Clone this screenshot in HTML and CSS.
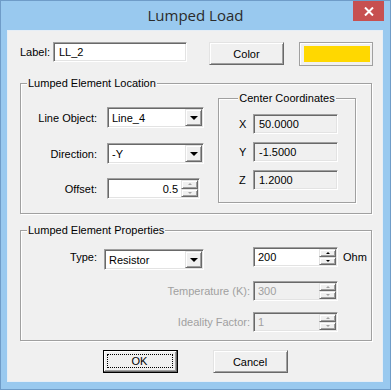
FILE: index.html
```html
<!DOCTYPE html>
<html lang="en">
<head>
  <meta charset="UTF-8">
  <title>Lumped Load</title>
  <link rel="stylesheet" href="styles.css">
</head>
<body>
  <div class="window">
    <!-- Barra del titolo -->
    <div class="titlebar">
      <span class="title">Lumped Load</span>
      <span class="close">
        <svg width="10" height="9" viewBox="0 0 10 9"><path d="M1 0.5 L9 8.5 M9 0.5 L1 8.5" stroke="#fff" stroke-width="2"/></svg>
      </span>
    </div>

    <div class="client">
      <!-- Etichetta e colore -->
      <div class="top-row">
        <span class="label-text">Label:</span>
        <span class="field field-label"><span class="value">LL_2</span></span>
        <span class="btn btn-color">Color</span>
        <span class="swatch"><span class="swatch-fill"></span></span>
      </div>

      <!-- Posizione -->
      <div class="group group-location">
        <div class="group-title">Lumped Element Location</div>
        <div class="location-body">
          <div class="location-left">
            <div class="form-row">
              <span class="row-label">Line Object:</span>
              <span class="field combo"><span class="value">Line_4</span><span class="drop"><i class="arrow"></i></span></span>
            </div>
            <div class="form-row row-direction">
              <span class="row-label">Direction:</span>
              <span class="field combo"><span class="value">-Y</span><span class="drop"><i class="arrow"></i></span></span>
            </div>
            <div class="form-row row-offset">
              <span class="row-label">Offset:</span>
              <span class="field spin-field offset"><span class="value right">0.5</span><span class="spinner disabled-spin"><i class="up"></i><i class="down"></i></span></span>
            </div>
          </div>

          <div class="group coords">
            <div class="group-title centered">Center Coordinates</div>
            <div class="coord-row first">
              <span class="coord-label">X</span>
              <span class="field readonly"><span class="value">50.0000</span></span>
            </div>
            <div class="coord-row">
              <span class="coord-label">Y</span>
              <span class="field readonly"><span class="value">-1.5000</span></span>
            </div>
            <div class="coord-row">
              <span class="coord-label">Z</span>
              <span class="field readonly"><span class="value">1.2000</span></span>
            </div>
          </div>
        </div>
      </div>

      <!-- Proprieta -->
      <div class="group group-props">
        <div class="group-title">Lumped Element Properties</div>
        <div class="prop-row first">
          <span class="row-label">Type:</span>
          <span class="field combo type-combo"><span class="value">Resistor</span><span class="drop"><i class="arrow"></i></span></span>
          <span class="field spin-field value-field"><span class="value">200</span><span class="spinner"><i class="up"></i><i class="down"></i></span></span>
          <span class="unit">Ohm</span>
        </div>
        <div class="prop-row disabled">
          <span class="long-label">Temperature (K):</span>
          <span class="field spin-field value-field off"><span class="value">300</span><span class="spinner disabled-spin"><i class="up"></i><i class="down"></i></span></span>
        </div>
        <div class="prop-row disabled">
          <span class="long-label">Ideality Factor:</span>
          <span class="field spin-field value-field off"><span class="value">1</span><span class="spinner disabled-spin"><i class="up"></i><i class="down"></i></span></span>
        </div>
      </div>

      <!-- Pulsanti -->
      <div class="buttons">
        <span class="btn btn-default"><span class="focus">OK</span></span>
        <span class="btn">Cancel</span>
      </div>
    </div>
  </div>
</body>
</html>
```

FILE: styles.css
```css
/* Stile generale */
* {
  box-sizing: border-box;
}

body {
  margin: 0;
  font-family: 'Liberation Sans', Arial, sans-serif;
  font-size: 11px;
  color: #000;
  background: #fff;
}

.window {
  width: 391px;
  height: 390px;
  background: #99c9ef;
  border: 1px solid #6f9cc8;
}

/* Barra del titolo */
.titlebar {
  position: relative;
  height: 29px;
  text-align: center;
}

.title {
  font-family: 'Open Sans', 'Noto Sans', sans-serif;
  font-size: 15px;
  line-height: 28px;
  color: #2b2b2b;
}

.close {
  position: absolute;
  top: 0;
  right: 6px;
  width: 31px;
  height: 20px;
  background: #c75050;
  display: flex;
  align-items: center;
  justify-content: center;
}

/* Area client */
.client {
  width: 376px;
  height: 352px;
  margin-left: 6px;
  background: #f0f0f0;
  border: 1px solid #e6eef6;
  padding: 11px 0 0 12px;
}

.top-row {
  display: flex;
  align-items: flex-start;
}

.label-text {
  width: 33px;
  line-height: 20px;
}

/* Campi incassati */
.field {
  display: flex;
  align-items: center;
  height: 20px;
  background: #fff;
  border: 1px solid;
  border-color: #a0a0a0 #fff #fff #a0a0a0;
  box-shadow: inset 1px 1px 0 #696969, inset -1px -1px 0 #e3e3e3;
  padding: 1px;
}

.field .value {
  flex: 1;
  padding-left: 3px;
  line-height: 16px;
  white-space: nowrap;
}

.field .value.right {
  text-align: right;
  padding-right: 3px;
}

.field-label {
  width: 134px;
}

.field-label .value {
  padding-left: 4px;
}

/* Pulsanti in rilievo */
.btn {
  display: flex;
  align-items: center;
  justify-content: center;
  width: 75px;
  height: 23px;
  background: #f0f0f0;
  border: 1px solid;
  border-color: #e3e3e3 #696969 #696969 #e3e3e3;
  box-shadow: inset 1px 1px 0 #fff, inset -1px -1px 0 #a0a0a0;
}

.btn-color {
  margin-left: 22px;
}

.swatch {
  margin-left: 15px;
  width: 74px;
  height: 24px;
  border: 1px solid #a0a0a0;
  box-shadow: inset 1px 1px 0 #fff;
  padding: 3px 2px 3px 4px;
}

.swatch-fill {
  display: block;
  height: 100%;
  background: #ffd800;
}

/* Riquadri di gruppo */
.group {
  border: 1px solid #a0a0a0;
  box-shadow: 1px 1px 0 #fff, inset 1px 1px 0 #fff;
}

.group-title {
  display: table;
  margin: -7px 0 0 6px;
  padding: 0 1px;
  line-height: 13px;
  background: #f0f0f0;
}

.group-title.centered {
  margin: -7px auto 0;
}

.group-location {
  margin-top: 17px;
  width: 352px;
  height: 131px;
}

.location-body {
  display: flex;
}

.location-left {
  width: 197px;
  padding-top: 17px;
}

.form-row {
  display: flex;
  align-items: center;
  height: 21px;
}

.row-direction {
  margin-top: 15px;
}

.row-offset {
  margin-top: 14px;
}

.row-label {
  width: 76px;
  text-align: right;
  margin-right: 10px;
}

.combo {
  width: 97px;
  height: 21px;
}

.drop {
  width: 17px;
  height: 100%;
  background: #f0f0f0;
  border: 1px solid;
  border-color: #e3e3e3 #696969 #696969 #e3e3e3;
  box-shadow: inset 1px 1px 0 #fff, inset -1px -1px 0 #a0a0a0;
  display: flex;
  align-items: center;
  justify-content: center;
}

.arrow {
  width: 0;
  height: 0;
  border-left: 4px solid transparent;
  border-right: 4px solid transparent;
  border-top: 4px solid #000;
  margin-top: 1px;
}

/* Spinner */
.spin-field .spinner {
  width: 17px;
  height: 100%;
  display: flex;
  flex-direction: column;
}

.spinner i {
  flex: 1;
  position: relative;
  background: #f0f0f0;
  border: 1px solid;
  border-color: #e3e3e3 #696969 #696969 #e3e3e3;
  box-shadow: inset 1px 1px 0 #fff, inset -1px -1px 0 #a0a0a0;
}

.spinner i::after {
  content: '';
  position: absolute;
  left: 50%;
  top: 50%;
  margin: -1px 0 0 -2px;
  border-left: 2px solid transparent;
  border-right: 2px solid transparent;
}

.spinner .up::after {
  border-bottom: 2px solid #000;
}

.spinner .down::after {
  border-top: 2px solid #000;
}

.disabled-spin .up::after {
  border-bottom-color: #a0a0a0;
}

.disabled-spin .down::after {
  border-top-color: #a0a0a0;
}

.offset {
  width: 93px;
  height: 21px;
}

/* Coordinate */
.coords {
  margin-top: 8px;
  width: 138px;
  height: 105px;
}

.coord-row {
  display: flex;
  align-items: center;
  padding-left: 20px;
  margin-top: 8px;
}

.coord-row.first {
  margin-top: 9px;
}

.coord-label {
  width: 14px;
}

.coord-row .field {
  width: 85px;
}

.readonly {
  background: #f0f0f0;
}

.readonly .value {
  padding-left: 4px;
}

/* Proprieta */
.group-props {
  margin-top: 16px;
  width: 352px;
  height: 111px;
}

.prop-row {
  display: flex;
  align-items: flex-start;
  margin-top: 11px;
}

.prop-row.first {
  margin-top: 10px;
}

.prop-row .row-label {
  line-height: 20px;
  margin-right: 7px;
}

.type-combo {
  width: 100px;
  margin-top: 2px;
}

.value-field {
  width: 85px;
}

.prop-row.first .value-field {
  margin-left: 49px;
}

.unit {
  margin-left: 5px;
  line-height: 20px;
}

.long-label {
  width: 229px;
  margin-right: 3px;
  text-align: right;
  line-height: 20px;
  color: #a0a0a0;
}

.value-field.off {
  background: #f0f0f0;
  color: #a0a0a0;
}

/* Pulsanti finali */
.buttons {
  display: flex;
  justify-content: center;
  gap: 35px;
  margin: 9px 0 0 -12px;
}

.btn-default {
  border: 1px solid #000;
  box-shadow: inset -1px -1px 0 #696969, inset 1px 1px 0 #fff, inset -2px -2px 0 #a0a0a0;
  padding: 3px 4px 4px 3px;
}

.btn-default .focus {
  flex: 1;
  height: 100%;
  border: 1px dotted #000;
  display: flex;
  align-items: center;
  justify-content: center;
}
```
